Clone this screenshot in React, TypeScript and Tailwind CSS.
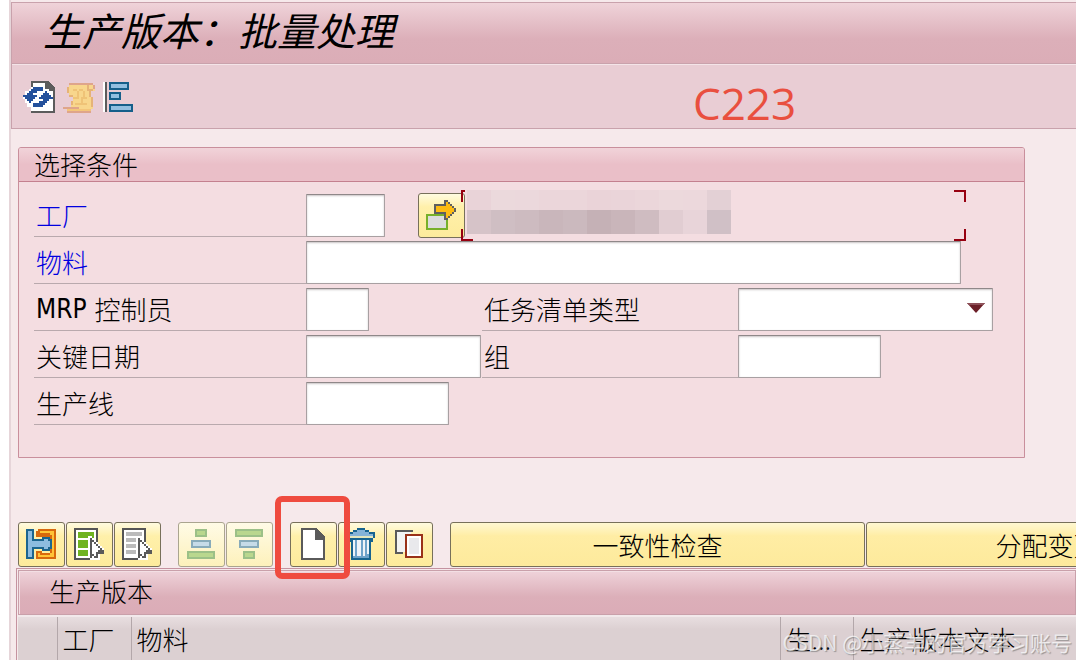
import type { ReactNode } from "react"
import clsx from "clsx"

const fieldClass =
  "h-[43px] rounded-[1px] border border-[#a8a0a2] border-t-[#8f8889] bg-white px-1 text-[26px] shadow-[inset_0_1px_2px_#c9c4c5] outline-none"

const mosaicTop = ["#e9d3d8", "#ebd9dc", "#ebd8dc", "#ebd6da", "#ebd6da", "#ead3d8", "#ead4d9", "#ebd6da", "#ecd9dc", "#ecd8dc", "#e3d0d5"]
const mosaicBottom = ["#d6c3c8", "#cfbec3", "#cdbbc0", "#c9b6bb", "#cbb9be", "#c5b1b6", "#c9b5ba", "#cfbcc1", "#e1cdd2", "#e8d4d9", "#d0c0c6"]

function PixelIcon({ w, h, children }: { w: number; h: number; children: ReactNode }) {
  return (
    <svg width={w * 2} height={h * 2} viewBox={`0 0 ${w} ${h}`} shapeRendering="crispEdges" aria-hidden="true" className="shrink-0">
      {children}
    </svg>
  )
}

function RefreshIcon() {
  const arrow = "M5 3h5v2H7v1H5v1h2v1H6v1H5v1H4v1H3v-1H2V9H1V8H0V7h2V6h1V5h1V4h1z"
  return (
    <PixelIcon w={16} h={16}>
      <path d="M4.5 .5h8l3 3v12h-11z" fill="#fff" stroke="#5c5c5c" />
      <path d="M11 0h2v1h1v1h1v1h1v2h-4v-1h-1z" fill="#5c5c5c" />
      <path d="M4 3h1V2h6v2h2v2h1v2h1v2h-1v2h-1v2h-2v1H4v-2H2v-2H1V9H0V7h1V5h2V4h1z" fill="#fff" />
      <path d={arrow} fill="#24519c" />
      <path d={arrow} transform="rotate(180 7.5 8)" fill="#24519c" />
    </PixelIcon>
  )
}

function ScrollIcon() {
  return (
    <PixelIcon w={16} h={16}>
      <path d="M3 2h13v3h-3v3h1v2h1v4h-1v1H2v-1H0v-1h4v-2h1V8H3V6H2V3h1z" fill="#f8d68c" />
      <path d="M3 1h12v1H3zM15 2h1v2h-1zM0 13h8v1H0zM2 15h12v1H2z" fill="#dfa58a" />
      <path d="M2 3h1v3H2zM3 7h2v1H3zM13 4h2v1h-2zM13 5h1v3h-1zM14 8h1v5h-1zM4 10h1v2H4zM12 2h1v3h-1z" fill="#e6b377" />
      <path d="M5 4h2v1H5zM8 4h2v1H8zM5 8h3v1H5zM9 8h3v1H9zM6 11h6v1H6zM7 5h1v3H7zM10 5h1v3h-1zM9 9h1v2H9z" fill="#efc377" />
      <path d="M2 14h12v1H2z" fill="#f3c57a" />
    </PixelIcon>
  )
}

function AlignIcon() {
  return (
    <PixelIcon w={15} h={15}>
      <path d="M0 0h1v15H0z" fill="#fff" />
      <path d="M1 0h1v15H1z" fill="#5c5c5c" />
      <path d="M3.5 .5h9v3h-9zM3.5 5.5h5v3h-5zM3.5 11.5h11v3h-11z" fill="#92bfe0" stroke="#155f8a" />
    </PixelIcon>
  )
}

function ArrowBoxIcon() {
  return (
    <PixelIcon w={15} h={15}>
      <path d="M.5 7.5h10v7H.5z" fill="#dcdcdc" stroke="#77b02a" />
      <path d="M4 2h5V0h2v1h1v1h1v1h1v1h1v2h-1v1h-1v1h-1v1h-1v1H9V7H4z" fill="#5f5f5f" />
      <path d="M5 3h5V1h1v1h1v1h1v1h1v2h-1v1h-1v1h-1v1h-1V6H5z" fill="#fdbb12" />
    </PixelIcon>
  )
}

function HookIcon() {
  return (
    <PixelIcon w={15} h={15}>
      <path d="M5 1h1V0h9v15H5v-4h3v1h4V4H5z" fill="#d8690d" />
      <path d="M7 1h7v13H6v-2h1v1h5v-1h1V3h-1V2H7z" fill="#ffc437" />
      <path d="M0 0h4v5h4V4h4v1h1v5h-1v1H8v-1H4v5H0z" fill="#1c658f" />
      <path d="M1 1h2v5h6V5h2v1h1v3h-1v1H9V9H3v5H1z" fill="#8dbce0" />
    </PixelIcon>
  )
}

function Cursor() {
  return (
    <>
      <path d="M7 4h2v1h1v1h1v1h1v1h1v1h1v1h1v3h-2v3H8v-1H7z" fill="#fff" />
      <path d="M8 5h1v1h1v1h1v1h1v1h1v1h1v1h1v2h-3v2h-2v-1H9v1H8z" fill="#5a5a5a" />
      <path d="M9 7h1v1h1v1h1v1h1v1h-1v1h-1v2h-1v-1H9z" fill="#fff" />
    </>
  )
}

function SelectAllIcon() {
  return (
    <PixelIcon w={15} h={16}>
      <path d="M.5 .5h11v15H.5z" fill="#fff" stroke="#555" />
      <path d="M2 2h8v3H2zM2 6h5v4H2zM2 11h5v3H2z" fill="#6fb321" />
      <Cursor />
    </PixelIcon>
  )
}

function DeselectIcon() {
  return (
    <PixelIcon w={15} h={16}>
      <path d="M.5 .5h11v15H.5z" fill="#fff" stroke="#555" />
      <path d="M2.500 2.500h7v1h-7zM2.500 5.500h4v1h-4zM2.500 8.500h4v1h-4zM2.500 11.500h4v1h-4z" fill="#eee" stroke="#bbb" />
      <Cursor />
    </PixelIcon>
  )
}

function SortUpIcon() {
  return (
    <PixelIcon w={14} h={15}>
      <path d="M4.500 .5h5v3h-5zM.5 11.500h13v3H.5z" fill="#b9d78e" stroke="#9cc088" />
      <path d="M2.500 6h9v3h-9z" fill="#c6dbe8" stroke="#88abba" />
    </PixelIcon>
  )
}

function SortDownIcon() {
  return (
    <PixelIcon w={14} h={15}>
      <path d="M.5 .5h13v3H.5zM4.500 11.500h5v3h-5z" fill="#b9d78e" stroke="#9cc088" />
      <path d="M2.500 6h9v3h-9z" fill="#c6dbe8" stroke="#88abba" />
    </PixelIcon>
  )
}

function NewPageIcon() {
  return (
    <PixelIcon w={12} h={16}>
      <path d="M.5 .5h7l4 4v11H.5z" fill="#fff" stroke="#5a5a5a" />
      <path d="M7 0h1v1h1v1h1v1h1v1h1v2H7z" fill="#5a5a5a" />
    </PixelIcon>
  )
}

function TrashIcon() {
  return (
    <PixelIcon w={14} h={16}>
      <path d="M5 0h4v1h2v1h3v3h-1v2h-1v9H2V7H1V5H0V2h3V1h2z" fill="#17648f" />
      <path d="M5 1h4v1h2v1h2v1H1V3h2V2h2z" fill="#85b4d8" />
      <path d="M1 4h12v1H1z" fill="#e4e7bd" />
      <path d="M3 6h8v9H3z" fill="#6fa3ca" />
      <path d="M3 6h1v8H3zM5 6h2v8H5zM8 6h1v8H8zM10 6h1v7h-1z" fill="#eef3f8" />
    </PixelIcon>
  )
}

function CopyIcon() {
  return (
    <PixelIcon w={14} h={14}>
      <path d="M0 0h9v1H1v10h3v1H0z" fill="#5a5a5a" />
      <path d="M1 1h7v1H5v9H1z" fill="#f3f3f3" />
      <path d="M5.500 2.500h8v11h-8z" fill="#fff" stroke="#9a3219" />
      <path d="M7 4h5v8H7z" fill="#e9e9ec" />
    </PixelIcon>
  )
}

function ToolButton({ label, disabled, children }: { label: string; disabled?: boolean; children: ReactNode }) {
  return (
    <button
      type="button"
      aria-label={label}
      disabled={disabled}
      className={clsx(
        "flex h-[45px] w-[47px] shrink-0 items-center justify-center rounded-[3px] border pr-px pb-0.5",
        disabled
          ? "border-[#aaa58f] bg-linear-to-b from-[#fffbe6] to-[#fdf1bb]"
          : "border-[#77705a] bg-linear-to-b from-[#fffbe0] via-[#fff0aa] via-30% to-[#fdeb9c]"
      )}
    >
      {children}
    </button>
  )
}

function WideButton({ children }: { children: ReactNode }) {
  return (
    <button
      type="button"
      className="h-[45px] w-[415px] shrink-0 rounded-[3px] border border-[#77705a] bg-linear-to-b from-[#fff8d2] via-[#ffeda4] via-30% to-[#fdea9c] text-[26px]"
    >
      {children}
    </button>
  )
}

function FieldLabel({ id, link, className, children }: { id: string; link?: boolean; className: string; children: ReactNode }) {
  return (
    <label
      htmlFor={id}
      className={clsx("flex h-[43px] shrink-0 items-center border-b border-[#b9a9ad] pl-0.5 leading-none", link && "text-[#0000e0]", className)}
    >
      {children}
    </label>
  )
}

function MaterialPreview() {
  return (
    <div className="absolute -top-1 left-[427px] h-[51px] w-[505px]">
      <span className="absolute top-0 left-0 h-3 w-1 border-t-2 border-l-2 border-[#970010]" />
      <span className="absolute bottom-0 left-0 h-3 w-3 border-b-2 border-l-2 border-[#970010]" />
      <span className="absolute top-0 right-0 h-3 w-3 border-t-2 border-r-2 border-[#970010]" />
      <span className="absolute right-0 bottom-0 h-3 w-3 border-r-2 border-b-2 border-[#970010]" />
      <div className="ml-[6px] grid w-[264px] grid-cols-11 grid-rows-[20px_24px]">
        {[...mosaicTop, ...mosaicBottom].map((color, i) => (
          <span key={i} style={{ backgroundColor: color }} />
        ))}
      </div>
    </div>
  )
}

function SelectionPanel() {
  return (
    <section className="max-w-[1007px] rounded-t-[3px] border border-[#c98f9c] bg-[#f4dde1]">
      <h2 className="flex h-[34px] items-center rounded-t-[2px] border-b border-[#c4808f] bg-linear-to-b from-[#f1d3d9] via-[#eabfc8] via-50% to-[#eabfc8] pb-0.5 pl-[15px] leading-none">
        选择条件
      </h2>
      <form className="flex flex-col gap-1 pt-3 pb-8 pl-[15px]">
        <div className="relative flex">
          <FieldLabel id="plant" link className="w-[272px]">工厂</FieldLabel>
          <input id="plant" className={clsx(fieldClass, "w-[79px]")} />
          <div className="-my-px ml-[33px]">
            <ToolButton label="多项选择">
              <ArrowBoxIcon />
            </ToolButton>
          </div>
          <MaterialPreview />
        </div>
        <div className="flex">
          <FieldLabel id="material" link className="w-[272px]">物料</FieldLabel>
          <input id="material" className={clsx(fieldClass, "w-[655px]")} />
        </div>
        <div className="flex">
          <FieldLabel id="mrp" className="w-[272px]">
            <span className="font-['DejaVu_Sans_Condensed','DejaVu_Sans',sans-serif] font-normal">MRP</span>
            <span className="ml-2">控制员</span>
          </FieldLabel>
          <input id="mrp" className={clsx(fieldClass, "w-[63px]")} />
          <FieldLabel id="task" className="ml-[113px] w-64">任务清单类型</FieldLabel>
          <div className="relative">
            <select id="task" className={clsx(fieldClass, "w-[255px] appearance-none")}>
              <option></option>
            </select>
            <svg width="18" height="10" viewBox="0 0 18 10" className="pointer-events-none absolute top-[15px] right-2" aria-hidden="true">
              <path d="M0 0h18L9 10z" fill="#6b1f28" />
              <path d="M0 0h18l-2 2H2z" fill="#8d5058" />
            </svg>
          </div>
        </div>
        <div className="flex">
          <FieldLabel id="date" className="w-[272px]">关键日期</FieldLabel>
          <input id="date" className={clsx(fieldClass, "w-[175px]")} />
          <FieldLabel id="group" className="ml-px w-64">组</FieldLabel>
          <input id="group" className={clsx(fieldClass, "w-[143px]")} />
        </div>
        <div className="flex">
          <FieldLabel id="line" className="w-[272px]">生产线</FieldLabel>
          <input id="line" className={clsx(fieldClass, "w-[143px]")} />
        </div>
      </form>
    </section>
  )
}

function TableToolbar() {
  return (
    <div className="mt-16 flex gap-[17px]">
      <div className="flex gap-px">
        <ToolButton label="明细"><HookIcon /></ToolButton>
        <ToolButton label="全选"><SelectAllIcon /></ToolButton>
        <ToolButton label="取消全选"><DeselectIcon /></ToolButton>
      </div>
      <div className="flex gap-px">
        <ToolButton label="升序" disabled><SortUpIcon /></ToolButton>
        <ToolButton label="降序" disabled><SortDownIcon /></ToolButton>
      </div>
      <div className="relative flex gap-px">
        <ToolButton label="创建"><NewPageIcon /></ToolButton>
        <ToolButton label="删除"><TrashIcon /></ToolButton>
        <ToolButton label="复制"><CopyIcon /></ToolButton>
        <span className="pointer-events-none absolute -top-[26px] -left-[15px] h-[83px] w-[75px] rounded-[7px] border-6 border-[#ef4b3f]" />
      </div>
      <div className="flex gap-px">
        <WideButton>一致性检查</WideButton>
        <WideButton>分配变更编号</WideButton>
      </div>
    </div>
  )
}

function VersionTable() {
  const head = "border-r border-[#b3a7aa] p-0 pl-[5px] text-left font-light"
  return (
    <div className="-ml-0.5 mt-px border-t border-l border-[#c593a0] pt-px pl-px">
      <h2 className="flex h-[45px] items-center border border-[#c9a0aa] bg-linear-to-b from-[#efd3da] via-[#dcafb9] via-60% to-[#dbacb7] pb-1 pl-[30px] leading-none shadow-[inset_1px_1px_#f3dfe4]">
        生产版本
      </h2>
      <table className="h-[45px] w-full table-fixed border-collapse border-t-2 border-[#f2e9eb] bg-linear-to-b from-[#e9dfe1] via-[#dcd0d2] via-30% to-[#dcd0d2] leading-none">
        <thead>
          <tr>
            <th className={clsx(head, "w-[39px]")} aria-label="选择" />
            <th className={clsx(head, "w-[74px]")}>工厂</th>
            <th className={head}>物料</th>
            <th className={clsx(head, "w-[73px]")}>生...</th>
            <th className="w-[223px] p-0 pl-[6px] text-left font-light">生产版本文本</th>
          </tr>
        </thead>
      </table>
    </div>
  )
}

export default function App() {
  return (
    <div className="relative flex h-screen overflow-hidden bg-white font-['Noto_Sans_CJK_SC',sans-serif] text-[26px] font-light text-black">
      <main className="ml-[9px] min-w-0 flex-1 border-l-2 border-[#e6d5d9] bg-[#f6e9eb] pt-0.5">
        <header className="border-l border-[#c9a2ac]">
          <h1 className="flex h-[62px] items-center border-y border-[#c9a2ac] bg-linear-to-b from-[#efd3d9] via-[#dcafb9] via-60% to-[#dbadb7] pb-[7px] pl-[31px] text-[39px] leading-none font-normal italic">
            生产版本：批量处理
          </h1>
          <div className="flex h-[65px] items-center gap-2 border-t border-b border-t-[#f4e4e8] border-b-[#c9a2ac] bg-[#e9cdd4] pl-[11px]">
            <button type="button" aria-label="刷新"><RefreshIcon /></button>
            <button type="button" aria-label="日志"><ScrollIcon /></button>
            <button type="button" aria-label="对齐"><AlignIcon /></button>
            <span className="ml-[552px] pt-3 font-['Open_Sans','Noto_Sans',sans-serif] text-[44px] leading-none font-normal text-[#e94f3f]">C223</span>
          </div>
        </header>
        <div className="pt-[18px] pl-[7px]">
          <SelectionPanel />
          <TableToolbar />
          <VersionTable />
        </div>
      </main>
      <span className="pointer-events-none absolute right-1 bottom-1 text-[21px] leading-7 font-normal text-white/70 [text-shadow:1px_1px_1px_#777a]">
        CSDN @小蒸羊的官方学习账号
      </span>
    </div>
  )
}
